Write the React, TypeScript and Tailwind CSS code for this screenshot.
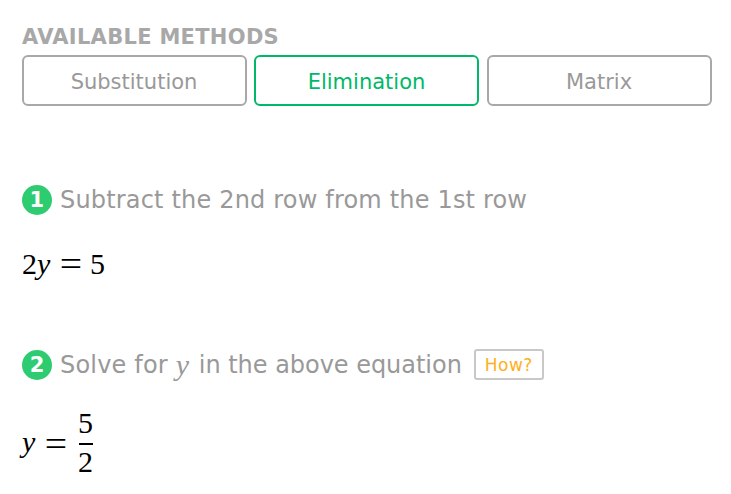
import React from "react";

interface Method {
  name: string;
  active?: boolean;
}

const methods: Method[] = [
  { name: "Substitution" },
  { name: "Elimination", active: true },
  { name: "Matrix" },
];

function MethodButton({ method }: { method: Method }) {
  return (
    <button
      className={
        method.active
          ? "mr-px h-[51px] w-[225px] rounded-[6px] border-2 border-[#00b868] pt-[5px] text-[21px] text-[#00b868]"
          : "h-[51px] w-[225px] rounded-[6px] border-2 border-[#a8a8a8] pt-[5px] pr-[7px] pl-[6px] text-[21px] text-[#999]"
      }
    >
      {method.name}
    </button>
  );
}

function StepNumber({ value }: { value: number }) {
  return (
    <span className="mr-2 flex size-[30px] shrink-0 items-center justify-center rounded-full bg-[#2ecc71] pt-[2px] text-[21px] font-bold text-white">
      {value}
    </span>
  );
}

function Equals() {
  return (
    <span className="mr-[7px] ml-[8px] inline-block w-[22px] translate-y-[2px] scale-x-110 text-center text-[36px] leading-9">
      =
    </span>
  );
}

export default function App() {
  return (
    <main className="h-[494px] w-[731px] overflow-hidden bg-white pt-[24px] pr-[19px] pl-[22px] font-['DejaVu_Sans',sans-serif]">
      <h2 className="h-[31px] text-[21px] leading-[27px] font-bold tracking-[0.3px] text-[#a8a8a8]">
        AVAILABLE METHODS
      </h2>
      <div className="flex gap-[7px]">
        {methods.map((method) => (
          <MethodButton key={method.name} method={method} />
        ))}
      </div>

      <section className="mt-[79px]">
        <div className="flex h-[30px] items-center text-[24px] tracking-[0.18px] text-[#999]">
          <StepNumber value={1} />
          <span>Subtract the 2nd row from the 1st row</span>
        </div>
        <div className="mt-[29px] flex h-9 items-baseline font-['Liberation_Serif',serif] text-[30px] leading-9 text-black">
          <span className="w-[15px]">2</span>
          <i className="w-[15px]">y</i>
          <Equals />
          <span className="ml-px">5</span>
        </div>
      </section>

      <section className="mt-[70px]">
        <div className="flex h-[30px] items-center text-[24px] text-[#999]">
          <StepNumber value={2} />
          <span className="tracking-[0.18px]">Solve for</span>
          <i className="mr-[8px] ml-[8px] w-[15px] font-['Liberation_Serif',serif] text-[30px] leading-[30px]">y</i>
          <span className="tracking-[-0.03px]">in the above equation</span>
          <button className="mb-px ml-[12px] h-[31px] w-[70px] rounded-[3px] border-2 border-[#c8c8c8] pt-[2px] text-[17px] tracking-[0.5px] text-[#ffb020]">
            How?
          </button>
        </div>
        <div className="mt-[24px] flex items-center font-['Liberation_Serif',serif] text-[30px] text-black">
          <i className="w-[15px]">y</i>
          <Equals />
          <span className="ml-[4px] flex flex-col items-center">
            <span className="leading-[37px]">5</span>
            <span className="mt-[2px] h-0.5 w-[14px] bg-black" />
            <span className="leading-[34px]">2</span>
          </span>
        </div>
      </section>
    </main>
  );
}
